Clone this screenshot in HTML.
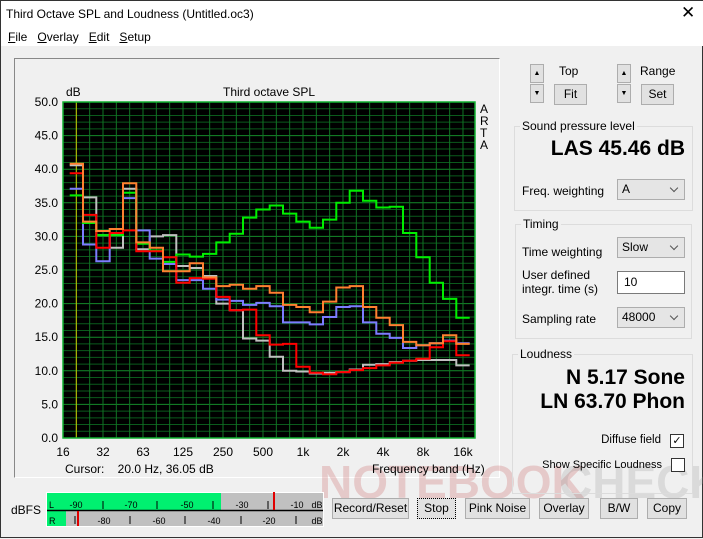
<!DOCTYPE html>
<html><head><meta charset="utf-8"><style>
*{box-sizing:border-box;margin:0;padding:0}
body{width:703px;height:538px;background:#f0f0f0;font-family:"Liberation Sans",sans-serif;font-size:12px;color:#000;position:relative;overflow:hidden;border:1px solid #333}
.a{position:absolute;white-space:nowrap}
.btn{position:absolute;background:#e1e1e1;border:1px solid #adadad;text-align:center;font-size:12px;line-height:19px}
.grp{position:absolute;border:1px solid #dcdcdc}
.lbl{position:absolute;background:#f0f0f0;padding:0 2px;top:-8px;left:6px}
.cmb{position:absolute;background:#e5e5e5;border:1px solid #adadad;padding-left:4px;line-height:19px}
.cmb:after{content:"";position:absolute;right:7px;top:5px;width:5px;height:5px;border-right:1px solid #555;border-bottom:1px solid #555;transform:rotate(45deg)}
.arr{position:absolute;width:14px;height:19px;background:#e1e1e1;border:1px solid #adadad;font-size:7px;text-align:center;line-height:17px}
.big{position:absolute;font-weight:bold;font-size:21px;right:17px}
</style></head><body>
<div class="a" style="left:0;top:0;width:703px;height:45px;background:#fff"></div>
<div class="a" style="left:5px;top:6px">Third Octave SPL and Loudness (Untitled.oc3)</div>
<div class="a" style="left:680px;top:2px;font-size:17px">✕</div>
<div class="a" style="left:7px;top:29px"><u>F</u>ile&nbsp;&nbsp;&nbsp;<u>O</u>verlay&nbsp;&nbsp;&nbsp;<u>E</u>dit&nbsp;&nbsp;&nbsp;<u>S</u>etup</div>
<div class="a" style="left:13px;top:57px;width:486px;height:420px;border-top:1px solid #888;border-left:1px solid #888;border-right:1px solid #fff;border-bottom:1px solid #fff"></div>
<svg class="a" style="left:0;top:0" width="703" height="538" id="s"></svg>
<div class="a" style="left:65px;top:84px">dB</div>
<div class="a" style="left:222px;top:84px">Third octave SPL</div>
<div class="a" style="left:479px;top:102px;line-height:12px">A<br>R<br>T<br>A</div>
<div class="a" style="left:64px;top:461px">Cursor:&nbsp;&nbsp;&nbsp;&nbsp;20.0 Hz, 36.05 dB</div>
<div class="a" style="left:371px;top:461px">Frequency band (Hz)</div>
<div class="a" style="left:10px;top:502px">dBFS</div>
<div class="arr" style="left:529px;top:63px">▲</div><div class="arr" style="left:529px;top:83px">▼</div>
<div class="a" style="left:558px;top:63px">Top</div>
<div class="btn" style="left:553px;top:83px;width:33px;height:21px">Fit</div>
<div class="arr" style="left:616px;top:63px">▲</div><div class="arr" style="left:616px;top:83px">▼</div>
<div class="a" style="left:639px;top:63px">Range</div>
<div class="btn" style="left:640px;top:83px;width:33px;height:21px">Set</div>
<div class="grp" style="left:513px;top:125px;width:179px;height:85px"><span class="lbl" style="left:5px">Sound pressure level</span></div>
<div class="big" style="top:136px">LAS 45.46 dB</div>
<div class="a" style="left:521px;top:183px">Freq. weighting</div>
<div class="cmb" style="left:616px;top:178px;width:68px;height:21px">A</div>
<div class="grp" style="left:514px;top:223px;width:177px;height:115px"><span class="lbl" style="left:5px">Timing</span></div>
<div class="a" style="left:521px;top:244px">Time weighting</div>
<div class="cmb" style="left:616px;top:236px;width:68px;height:21px">Slow</div>
<div class="a" style="left:521px;top:267px;line-height:14px">User defined<br>integr. time (s)</div>
<div class="a" style="left:616px;top:270px;width:68px;height:23px;background:#fff;border:1px solid #7a7a7a;padding:3px 0 0 6px">10</div>
<div class="a" style="left:521px;top:311px">Sampling rate</div>
<div class="cmb" style="left:616px;top:306px;width:68px;height:21px">48000</div>
<div class="grp" style="left:511px;top:353px;width:181px;height:140px"><span class="lbl" style="left:5px">Loudness</span></div>
<div class="big" style="top:365px">N 5.17 Sone</div>
<div class="big" style="top:389px">LN 63.70 Phon</div>
<div class="a" style="right:41px;top:433px;font-size:11.5px">Diffuse field</div>
<div class="a" style="left:669px;top:433px;width:14px;height:14px;background:#fff;border:1px solid #333;font-size:11px;line-height:12px;text-align:center">✓</div>
<div class="a" style="right:40px;top:458px;font-size:11px">Show Specific Loudness</div>
<div class="a" style="left:670px;top:457px;width:14px;height:14px;background:#fff;border:1px solid #333"></div>
<div class="btn" style="left:331px;top:497px;width:77px;height:21px">Record/Reset</div>
<div class="btn" style="left:416px;top:497px;width:39px;height:21px;border:1px dotted #000">Stop</div>
<div class="btn" style="left:464px;top:497px;width:65px;height:21px">Pink Noise</div>
<div class="btn" style="left:538px;top:497px;width:50px;height:21px">Overlay</div>
<div class="btn" style="left:599px;top:497px;width:38px;height:21px">B/W</div>
<div class="btn" style="left:646px;top:497px;width:40px;height:21px">Copy</div>
<script>
var s=document.getElementById('s'),h='';
function L(x1,y1,x2,y2,c,w){h+='<line x1="'+x1+'" y1="'+y1+'" x2="'+x2+'" y2="'+y2+'" stroke="'+c+'" stroke-width="'+(w||1)+'"/>';}
function T(x,y,t,a,sz){h+='<text x="'+x+'" y="'+y+'" font-size="'+(sz||12)+'" text-anchor="'+(a||'middle')+'" font-family="Liberation Sans">'+t+'</text>';}
var X0=62,X1=474,Y0=437,Y1=101,dy=(Y0-Y1)/50,bw=13.333;
/* watermark behind */
h+='<text x="318" y="497" font-size="46" font-weight="bold" fill="#c04040" fill-opacity="0.22" font-family="Liberation Sans">NOTEBOOK</text><text x="558" y="497" font-size="46" font-weight="bold" fill="#999" fill-opacity="0.25" font-family="Liberation Sans">CHECK</text>';
h+='<rect x="62" y="101" width="412" height="336" fill="#000"/>';
for(var d=1;d<50;d++){var y=Y0-d*dy;L(X0,y,X1,y,d%5?'#0b5a1c':'#148a2a');}
for(var i=1;i<=30;i++){var x=X0+i*bw;L(x,Y1,x,Y0,'#117424');}
L(75.3,Y1,75.3,Y0,'#c8c800');
h+='<rect x="62" y="101" width="412" height="336" fill="none" stroke="#10b030" stroke-width="1.5"/>';
for(var d=0;d<=50;d+=5)T(57,Y0-d*dy+4,d.toFixed(1),'end');
var lb=['16','32','63','125','250','500','1k','2k','4k','8k','16k'];
for(var i=0;i<11;i++)T(X0+i*40,455,lb[i]);
var D={
gray:[40.6,35.8,30.2,28.3,37.1,28.1,30.0,30.2,25.6,25.3,24.1,20.0,19.0,14.8,14.5,12.1,10.0,9.9,9.6,9.7,9.8,10.2,10.9,11.0,11.3,11.5,11.6,11.6,11.6,10.8],
'#7c7cff':[37.1,28.8,26.3,30.3,35.7,30.9,26.7,25.9,23.5,23.5,22.2,20.6,20.4,19.8,20.1,19.6,17.2,17.2,16.9,18.0,19.5,19.6,17.2,15.5,14.9,13.4,13.8,14.1,14.5,14.1],
'#00ee00':[36.1,32.0,30.2,30.2,36.5,28.9,27.9,26.2,27.3,27.0,27.4,29.1,30.4,32.8,34.0,34.6,33.4,32.2,31.3,32.5,35.0,36.8,35.3,34.3,34.4,30.5,26.9,23.1,20.7,17.9],
'#ff0000':[39.4,33.2,28.3,30.5,30.9,27.8,27.8,26.9,23.1,23.8,23.7,21.0,19.0,19.1,15.3,13.9,14.0,10.6,9.7,9.5,9.8,10.1,10.4,10.8,11.2,11.5,11.8,13.5,14.4,12.3],
'#ff8030':[40.8,32.2,30.8,31.1,37.9,29.1,28.3,24.8,24.8,26.0,23.9,22.6,22.8,22.2,22.6,21.6,19.8,19.5,18.7,20.3,22.4,22.6,19.5,17.9,16.8,14.3,13.8,14.1,15.3,14.0]};
var cols={gray:'#c0c0c0'};
for(var k in D){var v=D[k],p='';for(var i=0;i<v.length;i++){var b=i+1,xa=X0+(b-0.5)*bw,xb=Math.min(X0+(b+0.5)*bw,472),y=(Y0-v[i]*dy).toFixed(1);p+=(i?'L':'M')+xa.toFixed(1)+' '+y+'L'+xb.toFixed(1)+' '+y;}
h+='<path d="'+p+'" fill="none" stroke="'+(cols[k]||k)+'" stroke-width="2"/>';}
/* meter */
h+='<rect x="45" y="491" width="278" height="35" fill="#fff"/><rect x="46" y="492" width="276" height="17" fill="#c0c0c0"/><rect x="46" y="510" width="276" height="15" fill="#c0c0c0"/>';
h+='<rect x="46" y="492" width="174" height="17" fill="#00f070"/><rect x="46" y="510" width="19" height="15" fill="#00f070"/>';
L(46,509.5,322,509.5,'#000',1.5);
L(273,491,273,509,'#e00000',2);L(77,510,77,525,'#e00000',2);
T(48,507,'L','start',9);T(48,523,'R','start',9);
[[75,'-90'],[130,'-70'],[186,'-50'],[241,'-30'],[296,'-10'],[316,'dB']].forEach(function(a){T(a[0],507,a[1],'middle',9)});
[102,156,212,267].forEach(function(x){L(x,500,x,508,'#000')});
[[103,'-80'],[158,'-60'],[213,'-40'],[268,'-20'],[316,'dB']].forEach(function(a){T(a[0],523,a[1],'middle',9)});
[74,129,184,240,295].forEach(function(x){L(x,515,x,523,'#000')});
s.innerHTML=h;
</script>
</body></html>
